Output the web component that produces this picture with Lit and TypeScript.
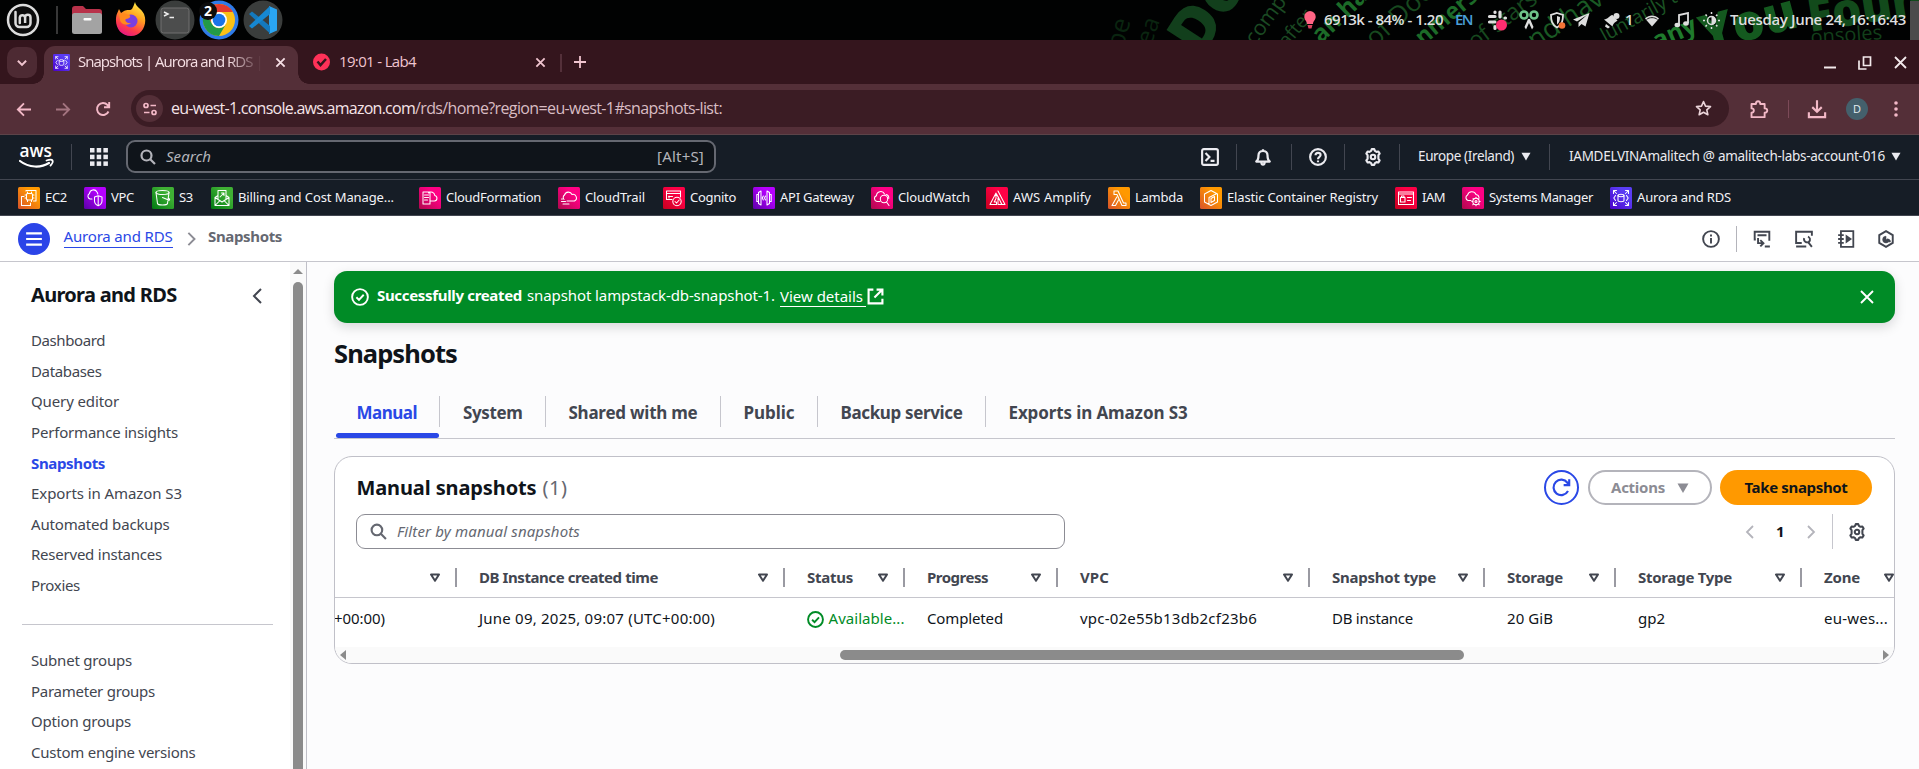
import { LitElement, html, svg, css } from "lit";
import { customElement, property } from "lit/decorators.js";

/** Text that spreads its letters so that it fills a given width. */
@customElement("fit-text")
class FitText extends LitElement {
  @property({ type: Number }) w = 0;
  @property() text = "";
  static styles = css`
    :host { display: inline-block; flex: none; white-space: pre; vertical-align: baseline; padding-bottom: 2px; }
  `;
  render() {
    return html`<span>${this.text}</span>`;
  }
  updated() {
    const s = this.renderRoot.querySelector("span") as HTMLElement;
    s.style.letterSpacing = "0px";
    const natural = s.getBoundingClientRect().width;
    s.style.letterSpacing = (this.w - natural) / this.text.length + "px";
    this.style.width = this.w + "px";
  }
}

const t = (text: string, w: number, cls = "") => html`<fit-text class=${cls} .w=${w} .text=${text}></fit-text>`;

const W = "#fff";
const svc: Record<string, any> = {
  ec2: svg`<rect x="8.5" y="6.500" width="6" height="6.500" rx="1"/><path d="M9.500 6.500V5M13.500 6.500V5M9.500 14.500V13M13.500 14.500V13M7 8h1.500M7 11h1.500M14.500 8H16M14.500 11H16M8 4V3.500H18V14h-2.500M6 9.500H3.500V18.500H12.500V16"/>`,
  vpc: svg`<path d="M8 12H6a3 3 0 0 1-.5-5.500A4 4 0 0 1 13 5c.5.800.8 1.500.8 2"/><path d="M10.500 10l3.700-1.300L18 10v4c0 2.500-2 4-3.800 4.800C12.500 18 10.500 16.500 10.500 14zM14.200 9v9.500"/>`,
  s3: svg`<ellipse cx="10.500" cy="5.500" rx="6.500" ry="2"/><path d="M4 5.500L5.500 16.500c.5 2 9.500 2 10 0L17 5.500M10.500 10.500l6 2.500c2 .8 1-1.500-.2-2"/>`,
  bill: svg`<path d="M4 10.500V18.500H18V10.500l-3-2M7 8.500l-3 2 7 4.500 7-4.500M4 18.500l5-5M18 18.500l-5-5M7 12V3.500h8V12M9 10l4-4M10.500 6H13v2.500"/>`,
  cf: svg`<path d="M4 5h7v12H4zM5.500 8h4M5.500 10.500h4M5.500 13h3M11 14h4.500a2.800 2.800 0 0 0 .3-5.500A3.800 3.800 0 0 0 9.500 6"/>`,
  trail: svg`<path d="M6 12.500a3 3 0 0 1 .5-4.500 4 4 0 0 1 7.500-.5 3.500 3.500 0 0 1 2.500 6.500H9M3.500 12h1M3.500 14.500h4M5 17h6"/>`,
  cog: svg`<path d="M9 12.500H3.500V4h14v6M3.500 6.500h14M5.500 9.500h4M6 9v2"/><circle cx="14" cy="14.500" r="4.200"/><path d="M12 14.500l1.500 1.500 2.700-3"/>`,
  api: svg`<path d="M8 4L5.500 5.500v11L8 18zM5.500 7.500H3.800v7h1.700M14 4l2.500 1.500v11L14 18zM16.500 7.500h1.700v7h-1.700M10.300 9l-1 2 1 2M12.500 9l-1 2 1 2"/>`,
  watch: svg`<path d="M9 14.500H6a3 3 0 0 1-.5-5.800A4.200 4.200 0 0 1 13.500 7"/><circle cx="13" cy="12" r="3.700"/><path d="M15.500 15l2.500 3.500M15 7.500c2 .5 3 2 2.800 4"/>`,
  amp: svg`<path d="M10 6L4 17.500h6.500V15H8.200L10 11.500zM12 4l7 13.500H16L10.500 7M12 9.500l2.200 4.500 1.600 3.500H12z"/>`,
  lam: svg`<path d="M6 4h4l5.500 12H18v2.500h-4L9 7.500H6zM8.800 10L4 18.500h3.500L10.500 13"/>`,
  ecr: svg`<path d="M11 3.500l6.500 3.500v8L11 18.500 4.500 15V7zM9 17V10.500L16 7M11 15.500V11.500L14.500 9.500v4z"/>`,
  iam: svg`<path d="M3.500 5h15v12.500h-15zM3.500 7h15M5.500 10.500h4.500v4.500H5.500zM6.500 10.500V9h2.500v1.500M12.500 10.500h4M12.500 13.500h3"/>`,
  ssm: svg`<path d="M9 13.500H6a3 3 0 0 1-.5-5.500 4.500 4.500 0 0 1 8.500-.5c1.800.3 2.800 1.500 3 3"/><circle cx="14" cy="14.500" r="3.200"/><circle cx="14" cy="14.500" r="1"/><path d="M14 10.200v1M14 17.800v1M9.800 14.500h1M17.200 14.500h1M11 11.500l.8.800M16.500 17l.8.800M17 11.500l-.8.800M11.500 17l-.8.800"/>`,
  rds: svg`<path d="M3.500 6.500v-3h3M3.500 3.500l3 3M18.500 6.500v-3h-3M18.500 3.500l-3 3M3.500 15.500v3h3M3.500 18.500l3-3M18.500 15.500v3h-3M18.500 18.500l-3-3"/><ellipse cx="11" cy="8.500" rx="3" ry="1.200"/><path d="M8 8.500v5c0 1.600 6 1.600 6 0v-5M5.500 8.500L3.800 11l1.700 2.500M16.500 8.500L18.200 11l-1.700 2.500"/>`,
};
const hue: Record<string, [string, string]> = {
  o: ["#d8522a", "#ff9900"], p: ["#5a00a8", "#b600ff"], g: ["#007a12", "#3fb034"],
  m: ["#b0084d", "#ff0084"], r: ["#c7001f", "#ff0046"], v: ["#4b00c9", "#5a3df5"],
};
const svcIcon = (name: string, h: string, size = 22) => html`
  <svg width=${size} height=${size} viewBox="0 0 22 22">
    <defs><linearGradient id="g" x1="0" y1="1" x2="1" y2="0"><stop offset="0" stop-color=${hue[h][0]} /><stop offset="0.7" stop-color=${hue[h][1]} /></linearGradient></defs>
    <rect width="22" height="22" rx="1.500" fill="url(#g)" />
    <g fill="none" stroke=${W} stroke-width="1.050" stroke-linejoin="round" stroke-linecap="round">${svc[name]}</g>
  </svg>`;

@customElement("service-tile")
class ServiceTile extends LitElement {
  @property() name = "ec2";
  @property() hue = "o";
  @property({ type: Number }) size = 22;
  static styles = css`:host { display: block; flex: none; } svg { display: block; }`;
  render() { return svcIcon(this.name, this.hue, this.size); }
}

const ic = (size: number, body: any, sw = 2) => html`<svg class="ic" width=${size} height=${size} viewBox="0 0 16 16" fill="none" stroke="currentColor" stroke-width=${sw}>${body}</svg>`;

const gear = svg`<path stroke-linejoin="round" d="M6.300 2.600L6.900 1h2.200l.6 1.600 1.400.8 1.700-.3 1.100 1.900L12.800 6.400v1.600 1.600l1.100 1.400-1.100 1.900-1.700-.3-1.400.8L9.100 15H6.900l-.6-1.600-1.400-.8-1.700.3L2.100 11l1.100-1.400V8 6.400L2.100 5l1.100-1.900 1.700.3z"/><circle cx="8" cy="8" r="2"/>`;
const bell = svg`<path stroke-linejoin="round" d="M2 12c1.500-1 2-2.500 2-5.500a4 4 0 0 1 8 0c0 3 .5 4.500 2 5.500zM6.500 12.500c0 3 3 3 3 0M8 1v1.500"/>`;
const help = svg`<circle cx="8" cy="8" r="7"/><path d="M5.800 6.500C5.800 3.500 10.300 3.700 10.300 6.300 10.300 8 8 7.800 8 10M8 11v1.600"/>`;
const magnify = svg`<circle cx="6.500" cy="6.500" r="5"/><path d="M10.200 10.200L15 15"/>`;
const check = svg`<circle cx="8" cy="8" r="7"/><path d="M4.800 8.200l2.300 2.300 4.200-4.500"/>`;
const tri = html`<svg class="ic" width="10" height="9" viewBox="0 0 11 9"><path d="M.5.500h10L5.500 9z" fill="currentColor" /></svg>`;
const sortTri = html`<svg class="ic sort" width="12" height="10" viewBox="0 0 12 10"><path d="M2 1.500h8L6 7.800z" fill="none" stroke="currentColor" stroke-width="2" stroke-linejoin="round" /></svg>`;

const services: [string, string, string, number, number][] = [
  ["ec2", "o", "EC2", 22, 17], ["vpc", "p", "VPC", 23, 18], ["s3", "g", "S3", 14, 18],
  ["bill", "g", "Billing and Cost Manage...", 156, 25], ["cf", "m", "CloudFormation", 95, 17],
  ["trail", "m", "CloudTrail", 60, 18], ["cog", "r", "Cognito", 46, 17], ["api", "p", "API Gateway", 74, 17],
  ["watch", "m", "CloudWatch", 72, 16], ["amp", "r", "AWS Amplify", 78, 17], ["lam", "o", "Lambda", 48, 17],
  ["ecr", "o", "Elastic Container Registry", 151, 17], ["iam", "r", "IAM", 23, 17], ["ssm", "m", "Systems Manager", 104, 17],
  ["rds", "v", "Aurora and RDS", 94, 0],
];
const nav1: [string, number][] = [["Dashboard", 74], ["Databases", 70.5], ["Query editor", 88], ["Performance insights", 147], ["Snapshots", 74], ["Exports in Amazon S3", 151], ["Automated backups", 138.5], ["Reserved instances", 131], ["Proxies", 49]];
const nav2: [string, number][] = [["Subnet groups", 101], ["Parameter groups", 124], ["Option groups", 100], ["Custom engine versions", 164.5]];
const tabs: [string, number][] = [["Manual", 60.500], ["System", 59.500], ["Shared with me", 129], ["Public", 51], ["Backup service", 122], ["Exports in Amazon S3", 179]];
const cols: { h: string; hw: number; c: string; cw: number }[] = [
  { h: "DB Instance created time", hw: 179, c: "June 09, 2025, 09:07 (UTC+00:00)", cw: 236 },
  { h: "Status", hw: 46, c: "Available...", cw: 76 },
  { h: "Progress", hw: 61, c: "Completed", cw: 76 },
  { h: "VPC", hw: 29, c: "vpc-02e55b13db2cf23b6", cw: 177 },
  { h: "Snapshot type", hw: 104, c: "DB instance", cw: 81 },
  { h: "Storage", hw: 56, c: "20 GiB", cw: 46 },
  { h: "Storage Type", hw: 94, c: "gp2", cw: 27 },
  { h: "Zone", hw: 36, c: "eu-wes...", cw: 64 },
];

@customElement("app-root")
class AppRoot extends LitElement {
  static styles = css`
    :host { display: flex; flex-direction: column; width: 1919px; height: 769px; overflow: hidden; background: #fcfcfd;
      font-family: "Noto Sans", "Open Sans", sans-serif; font-size: 15px; line-height: 20px; color: #0f141a; }
    * { box-sizing: border-box; }
    svg { display: block; flex: none; }
    .b { font-weight: 700; }

    /* desktop panel */
    .panel { height: 40px; flex: none; background: #010202; position: relative; overflow: hidden; display: flex; justify-content: space-between; font-family: "Open Sans", sans-serif; color: #dedede; }
    .wall { position: absolute; right: 0; top: 0; }
    .wall text { font-family: "Open Sans", sans-serif; }
    .apps { display: grid; grid-template-columns: 42px 18px 42px 46px 42px 46px 42px; align-items: center; justify-items: center; padding-left: 6px; position: relative; }
    .apps > :first-child { justify-self: start; }
    .vbar { width: 2px; height: 28px; background: #383838; }
    .tray { position: relative; display: grid; align-items: center; justify-items: center; font-weight: 600; font-size: 15px;
      grid-template-columns: 12px 8px 119px 12px 17px 15px 20px 12px 20px 10px 17px 7px 17px 13px 16px 6px 8px 11px 16px 14px 15px 14px 17px 10px 176px 4px 9px; }
    .en { color: #4a9fd8; font-weight: 600; }
    .sliver { width: 9px; height: 39px; background: #4b4b4b; }

    /* browser */
    .strip { height: 44px; flex: none; background: #34151d; display: flex; padding: 6px 12px 0 7px; color: #f0c4cf; font-family: "Open Sans", sans-serif; }
    .tabsearch { width: 30px; height: 31px; border-radius: 10px; background: #4d2a33; display: grid; place-items: center; margin-top: 1px; }
    .tab1 { margin-left: 7px; width: 254px; background: #542f38; border-radius: 11px 11px 0 0; display: flex; align-items: center; padding: 0 12px 6px 9px; color: #f6dfe4; position: relative; }
    .foot { position: absolute; bottom: 0; width: 11px; height: 11px; }
    .foot.l { left: -11px; background: radial-gradient(circle at 0 0, transparent 10.500px, #542f38 11px); }
    .foot.r { right: -11px; background: radial-gradient(circle at 100% 0, transparent 10.500px, #542f38 11px); }
    .fade { margin-left: 8px; width: 184px; overflow: hidden; -webkit-mask: linear-gradient(90deg, #000 150px, transparent 184px); mask: linear-gradient(90deg, #000 150px, transparent 184px); white-space: nowrap; }
    .tab1 .x { margin-left: 13px; }
    .tab2 { display: flex; align-items: center; padding: 0 0 6px 15px; width: 248px; }
    .tab2 fit-text { margin-left: 9px; }
    .tab2 .x { margin-left: auto; }
    .tsep { width: 2px; height: 18px; background: #54303a; margin: 8px 0 0 14px; }
    .plus { margin: 10px 0 0 12px; }
    .win { margin-left: auto; display: grid; grid-template-columns: 12px 22px 14px 22px 13px; height: 33px; align-items: center; color: #f3e9eb; }
    .win > :nth-child(2) { grid-column: 3; } .win > :nth-child(3) { grid-column: 5; }
    .toolbar { height: 51px; flex: none; background: #542f38; border-bottom: 1px solid #5c4348; display: flex; align-items: center; padding: 0 16px; color: #f3b9c7; font-family: "Open Sans", sans-serif; }
    .toolbar > .dim { opacity: .5; margin-left: 24.500px; }
    .toolbar > .rel { margin-left: 24px; }
    .omni { flex: none; width: 1598px; height: 37px; border-radius: 19px; background: #3b1c24; margin-left: 20.500px; display: flex; align-items: center; padding: 0 17px 0 5px; margin-top: -1px; font-size: 16px; }
    .chip { width: 27px; height: 27px; border-radius: 50%; background: #542f38; display: grid; place-items: center; margin-right: 8px; }
    .host { color: #f6e4e8; } .path { color: #d9bcc3; }
    .omni .star { margin-left: auto; color: #ecd5da; }
    .tools { display: grid; align-items: center; justify-items: center; grid-template-columns: 20px 18px 2px 18px 20px 18px 24px 19px 16px; width: 158px; margin-left: 20px; }
    .tools > :nth-child(2) { grid-column: 3; } .tools > :nth-child(3) { grid-column: 5; } .tools > :nth-child(4) { grid-column: 7; } .tools > :nth-child(5) { grid-column: 9; }
    .tools .s { width: 1px; height: 18px; background: #7c4a58; }
    .ava { width: 22px; height: 22px; border-radius: 50%; background: #44606c; color: #e5eef2; font-size: 11px; display: grid; place-items: center; }

    /* aws nav */
    .aws { height: 45px; flex: none; background: #161d26; border-bottom: 1px solid #424650; display: flex; align-items: center; padding: 0 19px 1px 19px; color: #ebebf0; font-size: 13.500px; }
    .s { width: 1px; height: 26px; background: #424650; }
    .aws > .s { margin-left: 16px; }
    .grid9 { margin-left: 18px; }
    .search { flex: none; width: 590px; height: 33px; border: 2px solid #656871; border-radius: 9px; background: #0f141a; margin-left: 18px; display: flex; align-items: center; padding: 0 10px 0 12px; color: #b4b4bb; font-size: 15px; }
    .search i { font-size: 15px; margin-left: 10px; }
    .search .alt { margin-left: auto; }
    .right { margin-left: auto; display: grid; align-items: center; justify-items: center; grid-template-columns: 18px 17px 1px 17px 18px 19px 1px 17px 18px 17px 1px 19px 18px 17px 1px 18px 96px 7px 9px 19px 1px 19px 316px 6px 9px; }
    .services { height: 36px; flex: none; background: #161d26; border-bottom: 1px solid #424650; display: flex; align-items: center; padding-left: 18px; color: #f3f3f7; font-size: 13px; }
    .sv { display: flex; align-items: center; gap: 5px; }

    .crumbs { height: 46px; flex: none; background: #fff; border-bottom: 1px solid #c6c6cd; display: flex; align-items: center; padding-left: 18px; }
    .burger { width: 32px; height: 32px; border-radius: 50%; background: #2b44e8; display: grid; place-items: center; color: #fff; }
    .burger svg { margin-top: 1px; }
    .link { color: #2a48e6; border-bottom: 1px solid #2a48e6; line-height: 18px; margin-left: 13.500px; margin-top: -3px; padding-bottom: 2px; }
    .crumbs .chev { margin-left: 11px; color: #8c8c94; }
    .crumbs .cur { margin-left: 10.500px; color: #656871; margin-top: -3px; }
    .crumbs .s { background: #b4b4bb; }
    .cico { margin-left: auto; color: #424650; display: grid; align-items: center; justify-items: center; grid-template-columns: 18px 16px 1px 16px 18px 24px 18px 24px 18px 22px 18px 24px; }

    .body { flex: 1; display: flex; min-height: 0; }
    .side { width: 307px; flex: none; background: #fff; border-right: 1px solid #c0c0c8; display: flex; }
    .nav { width: 290px; padding: 23px 17px 0 22px; color: #424650; }
    .head { display: flex; align-items: center; justify-content: space-between; padding: 0 11px 0 9px; font-size: 20px; height: 22px; color: #0f141a; margin-bottom: 19px; }
    .head svg { color: #424650; }
    .item { height: 30.600px; display: flex; align-items: center; padding-left: 9px; }
    .item.on { color: #2a48e6; font-weight: 700; }
    .hr { height: 1px; background: #c6c6cd; margin: 22.600px 0 20.800px; }
    .sbar { width: 16px; background: #fafafa; display: flex; flex-direction: column; align-items: center; padding-top: 7px; }
    .sbar i { width: 10px; flex: 1; margin-top: 8px; background: #8b8b8b; border-radius: 5px 5px 0 0; }
    .main { flex: 1; min-width: 0; padding: 9px 24px 0 27px; }
    .flash { height: 52px; border-radius: 13px; background: #008b26; color: #fff; display: flex; align-items: center; padding: 0 20px 2px 17px; box-shadow: 0 4px 12px rgba(0, 7, 22, .15); }
    .flash > svg { margin-top: 2px; }
    .flash .b { margin-left: 8px; }
    .flash .m { margin-left: 5px; }
    .flash .u { margin-left: 5px; border-bottom: 1px solid #fff; width: 86px; height: 20px; line-height: 18px; margin-top: 1px; }
    .flash .ext { margin-left: 1px; margin-top: 1px; }
    .flash .close { margin-left: auto; margin-top: 1px; }
    h1 { margin: 15px 0 0; font-size: 25.500px; line-height: 31px; height: 32px; }
    .tabs { margin-top: 25px; height: 44px; border-bottom: 1px solid #c6c6cd; display: flex; font-size: 17px; font-weight: 700; color: #424650; padding-left: 2px; margin-bottom: 17px; }
    .tb { display: flex; flex-direction: column; height: 43px; }
    .tb .in { height: 31px; margin-top: 1px; padding: 5px 22px 0 23px; border-right: 1px solid #c6c6cd; display: flex; align-items: center; }
    .tb:first-child .in { padding-left: 20.500px; }
    .tb:last-child .in { border: 0; }
    .tb.on { color: #2a48e6; }
    .tb.on::after { content: ""; height: 5px; border-radius: 3px; background: #2a48e6; margin-top: 6px; margin-right: 1px; }
    .card { height: 208px; border: 1px solid #c0c0c8; border-radius: 18px; background: #fff; overflow: hidden; display: flex; flex-direction: column; }
    .top { height: 35px; margin-top: 13px; padding: 0 22px 0 21.500px; display: flex; align-items: center; font-size: 20px; flex: none; }
    .top > fit-text { padding-bottom: 0; }
    .top .cnt { color: #656871; margin-left: 6px; }
    .btns { margin-left: auto; display: flex; font-size: 15px; gap: 8.500px; font-weight: 700; }
    .btn { height: 35px; border-radius: 18px; display: flex; align-items: center; justify-content: center; }
    .ref { width: 35px; border: 2px solid #2a48e6; color: #2a48e6; }
    .act { width: 124px; border: 2px solid #b4b4bb; color: #8c8c94; gap: 12px; padding-left: 1px; }
    .take { width: 152px; background: #ff9900; }
    .filt { height: 35px; margin-top: 9px; padding: 0 28px 0 21px; display: flex; align-items: center; flex: none; }
    .fin { width: 709px; height: 35px; border: 1px solid #8c8c94; border-radius: 9px; display: flex; align-items: center; padding-left: 13px; color: #656871; font-style: italic; gap: 10px; }
    .pag { margin-left: auto; height: 35px; display: grid; align-items: center; justify-items: center; grid-template-columns: 9px 22px 9px 22px 9px 16px 1px 15px 18px; color: #b4b4bb; }
    .pag .s { height: 35px; background: #c6c6cd; }
    .th, .td { display: grid; grid-template-columns: 122px 328px 120px 153px 252px 175px 131px 186px 109px; flex: none; width: 1576px; }
    .th { margin-top: 11px; height: 38px; border-bottom: 1px solid #c6c6cd; font-weight: 700; color: #424650; padding-bottom: 2px; }
    .th > div { display: flex; align-items: center; justify-content: space-between; padding-left: 22px; }
    .th .e { display: flex; align-items: center; gap: 14.500px; }
    .th .e i { width: 2px; height: 19px; background: #9a9aa2; }
    .td { height: 49px; align-items: center; padding-bottom: 8px; }
    .td > div { padding-left: 22px; display: flex; align-items: center; white-space: nowrap; }
    .td > div:first-child { padding-left: 0; margin-left: -1px; }
    .td .ok { color: #008b26; gap: 4.500px; }
    .td svg { margin-top: 1px; }
    .hs { height: 16px; background: #fafafa; display: grid; align-items: center; grid-template-columns: 6px 494px 624px 419px 6px; padding-left: 5px; color: #8b8b8b; }
    .hs b { height: 10px; border-radius: 5px; background: #8b8b8b; grid-column: 3; }
    .hs svg:last-child { grid-column: 5; }
    .c3 { grid-column: 3; } .c5 { grid-column: 5; } .c7 { grid-column: 7; } .c9 { grid-column: 9; } .c11 { grid-column: 11; } .c13 { grid-column: 13; }
    .c15 { grid-column: 15; } .c17 { grid-column: 17; } .c19 { grid-column: 19; } .c21 { grid-column: 21; } .c23 { grid-column: 23; } .c25 { grid-column: 25; } .c27 { grid-column: 27; }
    .dark { color: #424650; } .ink { color: #0f141a; }
  `;

  panel() {
    return html`<div class="panel">
      <svg class="wall" width="820" height="40" viewBox="0 0 820 40">
        <g>
          <text transform="translate(24 50) rotate(-75)" font-size="26" fill="#0a2510">be</text>
          <text transform="translate(52 46) rotate(-70)" font-size="24" fill="#0a2510">ea</text>
          <text transform="translate(102 58) rotate(-57)" font-size="62" font-weight="800" fill="#123f1c">Do</text>
          <text transform="translate(156 46) rotate(-54)" font-size="21" fill="#1b4a23">comp</text>
          <text transform="translate(188 48) rotate(-50)" font-size="19" fill="#1b4a23">after</text>
          <text transform="translate(222 44) rotate(-44)" font-size="24" font-weight="700" fill="#1c6b28">an hac</text>
          <text transform="translate(276 48) rotate(-42)" font-size="26" fill="#17491f">of Docu</text>
          <text transform="translate(324 46) rotate(-40)" font-size="23" font-weight="700" fill="#1c6b28">nmers a</text>
          <text transform="translate(376 50) rotate(-37)" font-size="23" fill="#17491f">of stars in</text>
          <text transform="translate(436 50) rotate(-34)" font-size="27" fill="#1a5a24">nd have</text>
          <text transform="translate(506 42) rotate(-29)" font-size="19" fill="#1b5424">luntarily takes</text>
          <text transform="translate(558 50) rotate(-24)" font-size="25" font-weight="700" fill="#1f7a2c">any</text>
          <text transform="translate(606 52) rotate(-15)" font-size="50" font-weight="800" fill="#14591f">You</text>
          <text transform="translate(711 32) rotate(-9)" font-size="46" font-weight="800" fill="#124a1b">Foun</text>
          <text transform="translate(712 44) rotate(-4)" font-size="20" fill="#123f1a">onsoles</text>
        </g>
      </svg>
      <div class="apps">
        <svg width="34" height="34" viewBox="0 0 34 34"><circle cx="17" cy="17" r="15" fill="#0c0c0c" stroke="#dcdcdc" stroke-width="2.500" /><path d="M9.500 9v11a4 4 0 0 0 4 4h7a4 4 0 0 0 4-4v-5.500a2.700 2.700 0 0 0-5.400 0V20v-5.500a2.700 2.700 0 0 0-5.300 0V20" fill="none" stroke="#dcdcdc" stroke-width="2.500" stroke-linecap="round" /></svg>
        <div class="vbar"></div>
        <svg width="32" height="30" viewBox="0 0 32 30"><path d="M1 4a3 3 0 0 1 3-3h8l3 3h13a3 3 0 0 1 3 3v9H1z" fill="#b8324a" /><rect x="1" y="8" width="30" height="21" rx="2.500" fill="#a3a3a3" /><rect x="12.500" y="13" width="8" height="2.500" rx="1" fill="#fff" /></svg>
        <svg width="32" height="36" viewBox="0 0 32 36"><defs><linearGradient id="ff" x1=".75" y1="0" x2=".3" y2="1"><stop offset="0" stop-color="#fff04a" /><stop offset=".4" stop-color="#ffa01f" /><stop offset=".75" stop-color="#ff3b4b" /><stop offset="1" stop-color="#e31587" /></linearGradient></defs><path d="M20 0c1 5 6 6 9 12 4 10-2 22-13 22S-1 24 1.500 13L4 7l2 4 3-2c3-2 6 0 8-2 1-2 2-4 3-7z" fill="url(#ff)" /><circle cx="16" cy="19" r="6.500" fill="#7a3fe0" /><path d="M4 12c5-1 7 0 10 1 3 1 0 4-3 4-2 1 1 5 5 4-3 3-10 2-11-3z" fill="#ff8a1c" /></svg>
        <svg width="40" height="40" viewBox="0 0 40 40"><circle cx="20" cy="20" r="19.500" fill="#3a3d3c" /><rect x="6" y="8" width="28" height="25" rx="2.500" fill="#4c4d4d" stroke="#707070" /><path d="M9 12l4 2-4 2M14.500 17.500h4.500" fill="none" stroke="#eee" stroke-width="1.500" /></svg>
        <svg width="40" height="40" viewBox="0 0 40 40"><circle cx="20" cy="20" r="19.500" fill="#2f7be8" /><g transform="translate(20 20)"><circle r="16" fill="#fbc116" /><path d="M-13.900-8A16 16 0 0 1 13.900-8H0A8 8 0 0 0-7 4z" fill="#e33b2e" /><path d="M-13.900-8A16 16 0 0 0 0 16L7 4A8 8 0 0 1-7 4z" fill="#229a48" /><circle r="8" fill="#fff" /><circle r="6.300" fill="#1a73e8" /></g><circle cx="9" cy="11" r="9" fill="#0c0c0c" /><text x="5" y="16" font-size="14" font-weight="700" fill="#fff">2</text></svg>
        <svg width="40" height="40" viewBox="0 0 40 40"><circle cx="20" cy="20" r="19.500" fill="#3a3d3c" /><path d="M26 6l8 3.500v21L26 34z" fill="#2aa5f2" /><path d="M6 14l3-2.500L27 26v7.500z" fill="#1479bd" /><path d="M6 26l3 2.500L27 14V6z" fill="#1688d2" /></svg>
      </div>
      <div class="tray">
        <svg width="12" height="18" viewBox="0 0 12 18"><path d="M6 0a5.700 5.700 0 0 1 5.700 5.700C11.700 9 9 10 9 13H3C3 10 .3 9 .3 5.700A5.700 5.700 0 0 1 6 0z" fill="#ff6484" /><path d="M3.500 14h5l-1 3.500h-3z" fill="#d9435f" /></svg>
        ${t("6913k - 84% - 1.20", 119, "c3")}
        ${t("EN", 17, "c5 en")}
        <svg class="c7" width="21" height="21" viewBox="0 0 21 21"><g stroke="#dedede" stroke-width="3.200" stroke-linecap="round"><path d="M8 2v.5M8 6.500H2.500M13 2v5M18.500 8h-.5M2.500 12H8M8 16.500v2" /></g><circle cx="14.500" cy="15" r="5.500" fill="#ff2d6f" /></svg>
        <svg class="c9" width="20" height="20" viewBox="0 0 20 20"><g fill="none" stroke="#6fc48a" stroke-width="2.600"><circle cx="5" cy="5" r="3.500" /><circle cx="15" cy="5" r="3.500" /></g><path d="M9 9l2 0 3.500 8-1.500 2.500L10 13l-3 6.500L5.500 17z" fill="#dedede" /></svg>
        <svg class="c11" width="17" height="17" viewBox="0 0 17 17"><path d="M8 1l6 2c0 6-1 9.500-6 12.500C3 12.500 2 9 2 3z" fill="none" stroke="#dedede" stroke-width="1.800" /><path d="M8 4l3 1c0 4-1 6-3 7.500z" fill="#dedede" /><circle cx="13" cy="13.500" r="3.300" fill="#f37335" /></svg>
        <svg class="c13" width="17" height="15" viewBox="0 0 17 15"><path d="M16.500 0L0 6.500l4 2L14 2 5.500 9.500V14l3-3 4 2.500z" fill="#dedede" /></svg>
        <svg class="c15" width="17" height="17" viewBox="0 0 17 17"><path d="M1 7.500c4 0 5-4 8.500-4.500l5 5.500c-1.500 1.500-4 2-5 6zM3 12l4 3-2 1.500-3-2z" fill="#dedede" /><circle cx="13.500" cy="4" r="3" fill="#dedede" /></svg>
        ${t("1", 8, "c17")}
        <svg class="c19" width="16" height="13" viewBox="0 0 16 13"><path d="M1 4.500C5 .5 11 .5 15 4.500L8 12.500z" fill="#dedede" /><path d="M2.500 5.500C5.500 3 10.500 3 13.500 5.500" fill="none" stroke="#222" stroke-width="1" /></svg>
        <svg class="c21" width="15" height="16" viewBox="0 0 15 16"><path d="M5 13V3l9-2v10" fill="none" stroke="#dedede" stroke-width="1.800" /><ellipse cx="3.300" cy="13" rx="2.800" ry="2.200" fill="#dedede" /><ellipse cx="12" cy="11.500" rx="2.800" ry="2.200" fill="#dedede" /></svg>
        <svg class="c23" width="17" height="17" viewBox="0 0 17 17"><circle cx="8.500" cy="8.500" r="4" fill="none" stroke="#dedede" stroke-width="1.500" /><path d="M8.500 4.500a4 4 0 0 1 0 8z" fill="#dedede" /><path d="M8.500 0v2M8.500 15v2M0 8.500h2M15 8.500h2M2.500 2.500l1.400 1.400M13 13l1.400 1.400M2.500 14.500l1.400-1.400M13 4l1.400-1.400" stroke="#dedede" stroke-width="1.500" /></svg>
        ${t("Tuesday June 24, 16:16:43", 176, "c25")}
        <div class="sliver c27"></div>
      </div>
    </div>`;
  }

  browser() {
    const x = ic(11, svg`<path d="M2 2l12 12M14 2L2 14"/>`, 2.6);
    return html`
      <div class="strip">
        <div class="tabsearch">${ic(12, svg`<path d="M2.500 5l5.500 5.500L13.500 5"/>`, 2.6)}</div>
        <div class="tab1">
          <span class="foot l"></span><span class="foot r"></span>
          <service-tile name="rds" hue="v" .size=${17}></service-tile>
          <div class="fade">${t("Snapshots | Aurora and RDS | e", 195)}</div>
          <div class="x">${x}</div>
        </div>
        <div class="tab2">
          <svg width="17" height="18" viewBox="0 0 17 18"><circle cx="8.500" cy="9" r="8.500" fill="#ff3158" /><path d="M4.500 8.500l3 3.500L13 6" fill="none" stroke="#34151d" stroke-width="2.500" /></svg>
          ${t("19:01 - Lab4", 77)}
          <div class="x">${x}</div>
        </div>
        <div class="tsep"></div>
        <div class="plus">${ic(12, svg`<path d="M8 0v16M0 8h16"/>`, 2.4)}</div>
        <div class="win">
          <svg width="12" height="13" viewBox="0 0 12 13"><path d="M0 11.500h12" stroke="currentColor" stroke-width="2" /></svg>
          <svg width="14" height="14" viewBox="0 0 14 14" fill="none" stroke="currentColor" stroke-width="1.700"><path d="M5.500 1h7v8.500h-7zM1 4.500V13h7.500" /></svg>
          <svg width="13" height="13" viewBox="0 0 13 13" stroke="currentColor" stroke-width="1.800"><path d="M1 1l11 11M12 1L1 12" /></svg>
        </div>
      </div>
      <div class="toolbar">
        ${ic(15, svg`<path d="M8.500 1.500L2 8l6.500 6.500M2 8h14"/>`, 2)}
        <div class="dim">${ic(15, svg`<path d="M7.500 1.500L14 8l-6.500 6.500M14 8H0"/>`, 2)}</div>
        <div class="rel">${ic(16, svg`<path d="M13.500 10.500A6 6 0 1 1 12.500 4L14 6M14.200 1v5.200H9"/>`, 1.900)}</div>
        <div class="omni">
          <div class="chip">${ic(16, svg`<circle cx="4" cy="4.500" r="2"/><path d="M8.500 4.500H14M2 11.500h5.500"/><circle cx="12" cy="11.500" r="2"/>`, 1.700)}</div>
          ${t("eu-west-1.console.aws.amazon.com", 244, "host")}${t("/rds/home?region=eu-west-1#snapshots-list:", 307, "path")}
          <div class="star">${ic(17, svg`<path stroke-linejoin="round" d="M8 1.500l1.900 4.300 4.700.4-3.500 3.100 1 4.600L8 11.500l-4.100 2.400 1-4.600L1.400 6.200l4.700-.4z"/>`, 1.500)}</div>
        </div>
        <div class="tools">
          ${ic(20, svg`<path stroke-linejoin="round" d="M2 4h3.500c0-3 3.500-3 3.500 0h3.500v3.500c2.800 0 2.800 3.500 0 3.500V14.500H2V11c2.500 0 2.500-3.500 0-3.500z"/>`, 1.500)}
          <div class="s"></div>
          ${ic(20, svg`<path d="M8 1v9M4.200 6.500L8 10.200l3.800-3.700M1.500 10.500v4h13v-4"/>`, 1.700)}
          <div class="ava">D</div>
          <svg width="4" height="18" viewBox="0 0 4 18" fill="currentColor"><circle cx="2" cy="3" r="1.800" /><circle cx="2" cy="9" r="1.800" /><circle cx="2" cy="15" r="1.800" /></svg>
        </div>
      </div>`;
  }

  aws() {
    return html`
      <div class="aws">
        <svg width="36" height="26" viewBox="0 0 36 26"><text x="0.500" y="13" font-size="17.500" font-weight="600" fill="#fff" textLength="32.500" lengthAdjust="spacingAndGlyphs" font-family="Open Sans">aws</text><path d="M1 17c9 7 21 7 29 2" fill="none" stroke="#fff" stroke-width="2.200" stroke-linecap="round" /><path d="M27.500 16.500c3-1 5.500-1 6 0s-.5 3.500-2 5" fill="none" stroke="#fff" stroke-width="1.800" stroke-linecap="round" /></svg>
        <div class="s"></div>
        <svg class="grid9" width="18" height="18" viewBox="0 0 18 18" fill="#ebebf0">${[0, 6.700, 13.400].map((y) => [0, 6.700, 13.400].map((x) => svg`<rect x=${x} y=${y} width="4.500" height="4.500" />`))}</svg>
        <div class="search">
          ${ic(16, magnify, 2.200)}
          <i>${t("Search", 45)}</i>
          ${t("[Alt+S]", 47, "alt")}
        </div>
        <div class="right">
          ${ic(18, svg`<rect x="1" y="1" width="14" height="14" rx="1.500"/><path d="M4 4.500L7.500 8 4 11.500M8.500 11.500H12"/>`, 1.900)}
          <div class="s c3"></div><div class="c5">${ic(18, bell, 2)}</div>
          <div class="s c7"></div><div class="c9">${ic(18, help, 1.900)}</div>
          <div class="s c11"></div><div class="c13">${ic(18, gear, 1.900)}</div>
          <div class="s c15"></div>${t("Europe (Ireland)", 96, "c17")}<div class="c19">${tri}</div>
          <div class="s c21"></div>${t("IAMDELVINAmalitech @ amalitech-labs-account-016", 316, "c23")}<div class="c25">${tri}</div>
        </div>
      </div>
      <div class="services">
        ${services.map(([n, h, l, w, g]) => html`<div class="sv" style="margin-right:${g}px"><service-tile name=${n} hue=${h}></service-tile>${t(l, w)}</div>`)}
      </div>
      <div class="crumbs">
        <div class="burger">${ic(18, svg`<path d="M1 3h14M1 8h14M1 13h14"/>`, 1.800)}</div>
        ${t("Aurora and RDS", 109, "link")}
        <div class="chev">${ic(14, svg`<path d="M5 1l7 7-7 7"/>`, 2.200)}</div>
        ${t("Snapshots", 74, "cur b")}
        <div class="cico">
          ${ic(18, svg`<circle cx="8" cy="8" r="7"/><path d="M8 7v5M8 4v1.700"/>`, 1.700)}
          <div class="s c3"></div>
          <div class="c5">${ic(18, svg`<path d="M2.500 8.500H1.500V1.500h13V9.500M4 4.700h8" stroke-dasharray="none" /><path d="M4.500 7v4.700h4M6.500 9l2.800 2.700L6.500 14.500M10.500 14.700H15"/>`, 1.700)}</div>
          <div class="c7">${ic(18, svg`<path d="M6 11.500H1V1.500h14V5M1 14.700h9M15 15L11.500 10.500"/><path d="M8.200 7.200a2.800 2.800 0 0 0 4.300 3.200 2.800 2.800 0 0 0-1-4.600"/>`, 1.700)}</div>
          <div class="c9">${ic(18, svg`<path d="M3.500 1h11v14h-11zM1 4.500h5M1 8h5M1 11.500h5"/><path d="M8.500 5.500v5L12 8z" fill="currentColor"/>`, 1.600)}</div>
          <div class="c11">${ic(18, svg`<path d="M8 1l6 3.500v7L8 15l-6-3.500v-7z"/><path d="M11 8.500A3 3 0 1 1 8 5.500L8 8.500z" fill="currentColor" stroke-width=".5"/><path d="M9 8l3 2.500"/>`, 1.700)}</div>
        </div>
      </div>`;
  }

  side() {
    const item = ([l, w]: [string, number]) => html`<div class="item ${l === "Snapshots" ? "on" : ""}">${t(l, w)}</div>`;
    return html`<div class="side">
      <div class="nav">
        <div class="head">${t("Aurora and RDS", 145.5, "b")}<svg width="10" height="16" viewBox="0 0 10 16" fill="none" stroke="currentColor" stroke-width="2"><path d="M9 1L2 8l7 7" /></svg></div>
        ${nav1.map(item)}
        <div class="hr"></div>
        ${nav2.map(item)}
      </div>
      <div class="sbar"><svg width="10" height="5" viewBox="0 0 10 5"><path d="M5 0l5 5H0z" fill="#8b8b8b" /></svg><i></i></div>
    </div>`;
  }

  main() {
    const end = html`<div class="e">${sortTri}<i></i></div>`;
    return html`<div class="main">
      <div class="flash">
        ${ic(18, check, 1.700)}
        ${t("Successfully created", 145, "b")}${t("snapshot lampstack-db-snapshot-1.", 248, "m")}
        <div class="u">${t("View details", 83)}</div>
        <div class="ext">${ic(17, svg`<path d="M6 1.500H1.500v13h13V10M9 1.500h5.500V7M14.500 1.500L7 9"/>`, 2)}</div>
        <div class="close">${ic(16, svg`<path d="M2 2l12 12M14 2L2 14"/>`, 1.900)}</div>
      </div>
      <h1>${t("Snapshots", 123)}</h1>
      <div class="tabs">${tabs.map(([l, w], i) => html`<div class="tb ${i ? "" : "on"}"><div class="in">${t(l, w)}</div></div>`)}</div>
      <div class="card">
        <div class="top">
          ${t("Manual snapshots", 180, "b")}${t("(1)", 25, "cnt")}
          <div class="btns">
            <div class="btn ref">${ic(19, svg`<path d="M13.500 11A6.500 6.500 0 1 1 13 4l1 2M14.500 1v5H9.800"/>`, 1.800)}</div>
            <div class="btn act">${t("Actions", 54)}<svg width="12" height="10" viewBox="0 0 12 10"><path d="M.5.500h11L6 10z" fill="currentColor" /></svg></div>
            <div class="btn take">${t("Take snapshot", 103)}</div>
          </div>
        </div>
        <div class="filt">
          <div class="fin">${ic(17, magnify, 2)}${t("Filter by manual snapshots", 183)}</div>
          <div class="pag">
            <svg width="9" height="14" viewBox="0 0 9 14" fill="none" stroke="currentColor" stroke-width="1.800"><path d="M8 1L2 7l6 6" /></svg>
            ${t("1", 9, "c3 b ink")}
            <svg class="c5" width="9" height="14" viewBox="0 0 9 14" fill="none" stroke="currentColor" stroke-width="1.800"><path d="M1 1l6 6-6 6" /></svg>
            <div class="s c7"></div>
            <div class="c9 dark">${ic(18, gear, 1.800)}</div>
          </div>
        </div>
        <div class="th">
          <div><span></span>${end}</div>
          ${cols.map((c) => html`<div>${t(c.h, c.hw)}${end}</div>`)}
        </div>
        <div class="td">
          <div>${t("+00:00)", 51)}</div>
          ${cols.map((c) => html`<div class=${c.h === "Status" ? "ok" : ""}>${c.h === "Status" ? ic(17, check, 1.800) : ""}${t(c.c, c.cw)}</div>`)}
        </div>
        <div class="hs">
          <svg width="6" height="10" viewBox="0 0 6 10"><path d="M6 0v10L0 5z" fill="currentColor" /></svg>
          <b></b>
          <svg width="6" height="10" viewBox="0 0 6 10"><path d="M0 0v10l6-5z" fill="currentColor" /></svg>
        </div>
      </div>
    </div>`;
  }

  render() {
    return html`${this.panel()}${this.browser()}${this.aws()}<div class="body">${this.side()}${this.main()}</div>`;
  }
}
